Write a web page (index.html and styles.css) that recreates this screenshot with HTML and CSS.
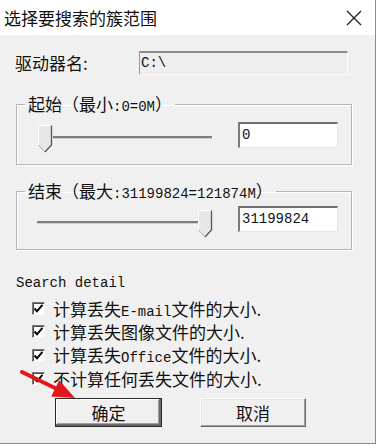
FILE: index.html
```html
<!DOCTYPE html>
<html lang="zh-CN">
<head>
<meta charset="utf-8">
<title>选择要搜索的簇范围</title>
<link rel="stylesheet" href="styles.css">
</head>
<body>
<div class="window">
  <div class="titlebar">
    <span class="title">选择要搜索的簇范围</span>
    <svg class="close" width="16" height="16" viewBox="0 0 16 16"><path d="M1 1L15 15M15 1L1 15" stroke="#1a1a1a" stroke-width="1.2" fill="none"/></svg>
  </div>
  <div class="body">
    <div class="drive-row">
      <span class="drive-label">驱动器名:</span>
      <div class="drive-field mono">C:\</div>
    </div>

    <fieldset class="group g1">
      <legend>起始（最小<span class="mono">:0=0M</span>）</legend>
      <div class="group-row">
        <div class="slider">
          <svg class="thumb" width="15" height="29" viewBox="0 0 15 29">
            <polygon points="0.5,0.5 13.5,0.5 13.5,20 7,27 0.5,20" fill="#e7e7e7"/>
            <polyline points="0.5,20 0.5,0.5 13.5,0.5" stroke="#ffffff" fill="none"/>
            <polyline points="13.5,0.5 13.5,20 7,27" stroke="#555555" fill="none" stroke-width="1.3"/>
            <polyline points="7,27 0.5,20" stroke="#a8a8a8" fill="none"/>
          </svg>
          <div class="track"></div>
        </div>
        <div class="edit mono">0</div>
      </div>
    </fieldset>

    <fieldset class="group g2">
      <legend>结束（最大<span class="mono">:31199824=121874M</span>）</legend>
      <div class="group-row">
        <div class="slider">
          <div class="track"></div>
          <svg class="thumb" width="15" height="29" viewBox="0 0 15 29">
            <polygon points="0.5,0.5 13.5,0.5 13.5,20 7,27 0.5,20" fill="#e7e7e7"/>
            <polyline points="0.5,20 0.5,0.5 13.5,0.5" stroke="#ffffff" fill="none"/>
            <polyline points="13.5,0.5 13.5,20 7,27" stroke="#555555" fill="none" stroke-width="1.3"/>
            <polyline points="7,27 0.5,20" stroke="#a8a8a8" fill="none"/>
          </svg>
        </div>
        <div class="edit mono">31199824</div>
      </div>
    </fieldset>

    <div class="detail-title mono">Search detail</div>
    <ul class="checks">
      <li><span class="cb"><svg width="11" height="11" viewBox="0 0 11 11"><path d="M1.5 5.5L4 8.2L9.5 1.8" stroke="#000" stroke-width="1.9" fill="none"/></svg></span><span class="cl">计算丢失<span class="mono">E-mail</span>文件的大小.</span></li>
      <li><span class="cb"><svg width="11" height="11" viewBox="0 0 11 11"><path d="M1.5 5.5L4 8.2L9.5 1.8" stroke="#000" stroke-width="1.9" fill="none"/></svg></span><span class="cl">计算丢失图像文件的大小.</span></li>
      <li><span class="cb"><svg width="11" height="11" viewBox="0 0 11 11"><path d="M1.5 5.5L4 8.2L9.5 1.8" stroke="#000" stroke-width="1.9" fill="none"/></svg></span><span class="cl">计算丢失<span class="mono">Office</span>文件的大小.</span></li>
      <li><span class="cb"><svg width="11" height="11" viewBox="0 0 11 11"><path d="M1.5 5.5L4 8.2L9.5 1.8" stroke="#000" stroke-width="1.9" fill="none"/></svg></span><span class="cl">不计算任何丢失文件的大小.</span></li>
    </ul>

    <div class="buttons">
      <button class="btn default">确定</button>
      <button class="btn">取消</button>
    </div>
  </div>
  <svg class="arrow" width="70" height="40" viewBox="0 0 70 40">
    <line x1="7" y1="7" x2="42" y2="24" stroke="#e3161b" stroke-width="4" stroke-linecap="round"/>
    <polygon points="60,33 36.2,31.4 44.2,15.2" fill="#e3161b"/>
  </svg>
</div>
</body>
</html>
```

FILE: styles.css
```css
* { box-sizing: border-box; }
html, body { margin: 0; padding: 0; background: #ffffff; }
body {
  font-family: "Noto Sans CJK SC", "Noto Sans", sans-serif;
  color: #111;
}
.mono {
  font-family: "Liberation Mono", "DejaVu Sans Mono", monospace;
}
.window {
  position: relative;
  width: 376px;
  height: 444px;
  border-right: 1px solid #8a8a8a;
  border-bottom: 1px solid #8a8a8a;
  background: #ffffff;
}
.titlebar {
  height: 35px;
  display: flex;
  align-items: center;
  justify-content: space-between;
  padding: 0 13px 0 4px;
  background: #ffffff;
}
.title {
  font-size: 17px;
  line-height: 20px;
}
.close { display: block; }
.body {
  height: 408px;
  background: #f0f0f0;
  padding-top: 16px;
}
.drive-row {
  display: flex;
  align-items: center;
  height: 24px;
  padding-left: 15px;
}
.drive-label {
  width: 124px;
  font-size: 17px;
  line-height: 20px;
}
.drive-field {
  width: 209px;
  height: 24px;
  background: #eeeeee;
  border-style: solid;
  border-width: 2px 1px 1px 1px;
  border-color: #8c8c8c #fbfbfb #fbfbfb #9a9a9a;
  font-size: 14px;
  line-height: 20px;
  padding-left: 1px;
}
.group {
  width: 336px;
  margin: 19px 0 0 16px;
  padding: 0;
  min-width: 0;
  border: 1px solid #b5b5b5;
  box-shadow: inset 1px 1px 0 #ffffff, 1px 1px 0 #ffffff;
}
.g2 { margin-top: 16px; }
.group legend {
  margin-left: 8px;
  padding: 0 3px;
  font-size: 17px;
  line-height: 20px;
  height: 20px;
}
.group legend .mono { font-size: 14px; line-height: 1; }
.group-row {
  display: flex;
  align-items: flex-start;
  padding-left: 20px;
  padding-bottom: 10px;
}
.g1 .group-row { padding-top: 8px; }
.g2 .group-row { padding-top: 5px; }
.slider {
  width: 176px;
  display: flex;
  align-items: flex-start;
  margin-top: 3px;
}
.g2 .slider { margin-top: 4px; }
.g1 .slider { padding-left: 1px; }
.thumb { display: block; flex: none; }
.track {
  flex: 1;
  height: 3px;
  margin-top: 11px;
  background: #7f7f7f;
  border-bottom: 1px solid #cfcfcf;
}
.g1 .track { margin-right: 1px; }
.edit {
  margin-left: 25px;
  width: 100px;
  height: 26px;
  background: #ffffff;
  border-style: solid;
  border-width: 2px 1px 1px 2px;
  border-color: #6e6e6e #e6e6e6 #e6e6e6 #7a7a7a;
  font-size: 14px;
  line-height: 20px;
  padding-left: 2px;
  padding-top: 1px;
}
.detail-title {
  margin: 24px 0 0 16px;
  font-size: 14px;
  line-height: 18px;
}
.checks {
  list-style: none;
  margin: 5px 0 0 0;
  padding: 0 0 0 32px;
}
.checks li {
  height: 23.33px;
  display: flex;
  align-items: center;
  gap: 8px;
  line-height: 20px;
}
.cb {
  width: 13px;
  height: 13px;
  flex: none;
  display: flex;
  align-items: center;
  justify-content: center;
  background: #ffffff;
  border: 1px solid;
  border-color: #7a7a7a #f4f4f4 #f4f4f4 #7a7a7a;
  box-shadow: inset 1px 1px 0 #4a4a4a;
}
.cb svg { display: block; }
.cl {
  font-size: 17px;
  line-height: 20px;
  height: 20px;
  white-space: nowrap;
}
.cl .mono { font-size: 14px; line-height: 1; }
.buttons {
  display: flex;
  gap: 38px;
  padding-left: 55px;
  margin-top: 8px;
}
.btn {
  height: 29px;
  width: 106px;
  font-family: "Noto Sans CJK SC", "Noto Sans", sans-serif;
  font-size: 17px;
  line-height: 20px;
  color: #111;
  background: #f0f0f0;
  border: 1px solid;
  border-color: #ffffff #696969 #696969 #ffffff;
  box-shadow: inset -1px -1px 0 #a0a0a0, inset 1px 1px 0 #e3e3e3;
  padding: 0;
}
.btn.default {
  width: 107px;
  border: 1px solid #2a2a2a;
  box-shadow: inset -2px -2px 0 #696969, inset 1px 1px 0 #ffffff, inset -3px -3px 0 #a0a0a0;
}
.arrow {
  position: absolute;
  left: 15px;
  top: 365px;
}
```
